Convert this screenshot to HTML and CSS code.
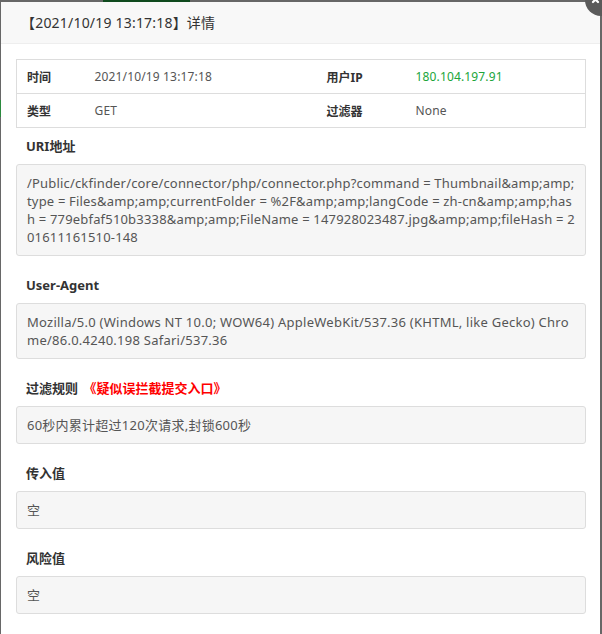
FILE: index.html
```html
<!DOCTYPE html>
<html lang="zh-CN">
<head>
<meta charset="utf-8">
<title>详情</title>
<link rel="stylesheet" href="styles.css">
</head>
<body>
<div class="backdrop-top"></div>
<div class="backdrop-left"></div>
<div class="modal">
  <div class="modal-title">【2021/10/19 13:17:18】详情</div>
  <div class="modal-body">
    <table class="info">
      <colgroup>
        <col class="c1"><col class="c2"><col class="c3"><col class="c4">
      </colgroup>
      <tr>
        <th>时间</th><td>2021/10/19 13:17:18</td>
        <th>用户IP</th><td class="ip">180.104.197.91</td>
      </tr>
      <tr>
        <th>类型</th><td>GET</td>
        <th>过滤器</th><td>None</td>
      </tr>
    </table>

    <div class="label">URI地址</div>
    <div class="box box-uri">/Public/ckfinder/core/connector/php/connector.php?command = Thumbnail&amp;amp;amp;type = Files&amp;amp;amp;currentFolder = %2F&amp;amp;amp;langCode = zh-cn&amp;amp;amp;hash = 779ebfaf510b3338&amp;amp;amp;FileName = 147928023487.jpg&amp;amp;amp;fileHash = 201611161510-148</div>

    <div class="label">User-Agent</div>
    <div class="box">Mozilla/5.0 (Windows NT 10.0; WOW64) AppleWebKit/537.36 (KHTML, like Gecko) Chrome/86.0.4240.198 Safari/537.36</div>

    <div class="label">过滤规则 <a class="report" href="#">《疑似误拦截提交入口》</a></div>
    <div class="box">60秒内累计超过120次请求,封锁600秒</div>

    <div class="label">传入值</div>
    <div class="box">空</div>

    <div class="label">风险值</div>
    <div class="box">空</div>
  </div>
  <span class="close" aria-label="关闭">
    <svg width="32" height="32" viewBox="0 0 32 32"><circle cx="16" cy="16" r="16" fill="#5a5a5a"/><path d="M8 13 L13 18 M13 13 L8 18" stroke="#fff" stroke-width="2.2" stroke-linecap="round"/></svg>
  </span>
</div>
</body>
</html>
```

FILE: styles.css
```css
html, body {
  margin: 0;
  padding: 0;
}
body {
  background: #676767;
  height: 634px;
  overflow: hidden;
  font-family: "Noto Sans", "Noto Sans CJK SC", sans-serif;
  color: #333;
  position: relative;
}
.backdrop-top {
  position: absolute;
  left: 103px;
  top: 0;
  width: 87px;
  height: 2px;
  background: #0f4a1e;
}
.backdrop-left {
  position: absolute;
  left: 0;
  top: 100px;
  width: 1px;
  height: 17px;
  background: #2b8a3e;
}
.modal {
  position: relative;
  margin: 2px 2px 0 1px;
  background: #fff;
  height: 640px;
}
.modal-title {
  height: 41px;
  line-height: 41px;
  padding-left: 20px;
  background: #f8f8f8;
  border-bottom: 1px solid #eee;
  font-size: 14px;
  letter-spacing: 0.2px;
  color: #333;
}
.modal-body {
  padding: 15px 14px 15px 15px;
}
.info {
  width: 100%;
  border-collapse: collapse;
  border: 1px solid #ddd;
  font-size: 12px;
  margin-bottom: 8px;
}
.info .c1 { width: 68px; }
.info .c2 { width: 232px; }
.info .c3 { width: 89px; }
.info tr {
  border-bottom: 1px solid #ddd;
}
.info th,
.info td {
  height: 33px;
  padding: 0 10px;
}
.info th {
  text-align: left;
  font-weight: bold;
  color: #333;
}
.info td {
  color: #555;
  letter-spacing: 0.15px;
}
.info td.ip {
  color: #20a53a;
}
.label {
  font-size: 13px;
  font-weight: bold;
  line-height: 20px;
  color: #333;
  padding-left: 10px;
  margin-bottom: 8px;
}
.report {
  color: #f00;
  text-decoration: none;
  margin-left: 2px;
}
.box {
  background: #f6f6f6;
  border: 1px solid #ddd;
  border-radius: 3px;
  padding: 9px 10px;
  font-size: 13px;
  letter-spacing: 0.25px;
  line-height: 18px;
  color: #555;
  word-break: break-all;
  margin-bottom: 19px;
}
.box-uri {
  letter-spacing: 0.18px;
}
.close {
  position: absolute;
  right: -17px;
  top: -18px;
  width: 32px;
  height: 32px;
  display: block;
}
.close svg {
  display: block;
}
```
